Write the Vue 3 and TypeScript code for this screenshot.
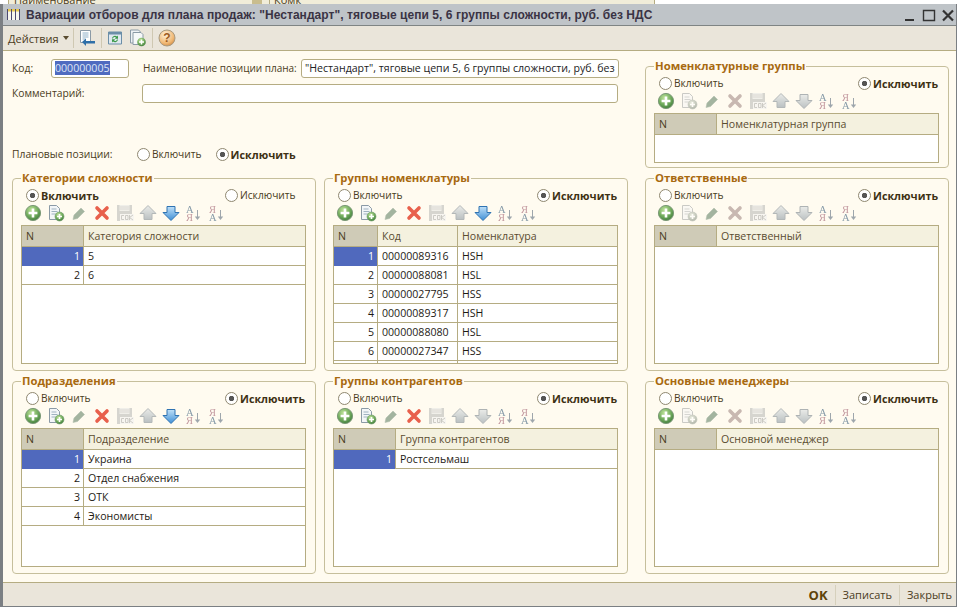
<script setup lang="ts">
type Col = { label: string; width?: number }
type Box = {
  title: string
  include: boolean
  cols: Col[]
  rows: string[][]
  enabled: string[]
  tail?: boolean
}
const tools = ['add', 'copy', 'edit', 'del', 'save', 'up', 'down', 'az', 'za']
const all = ['add', 'copy', 'del', 'down', 'az', 'za']
const topBox: Box = {
  title: 'Номенклатурные группы',
  include: false,
  cols: [{ label: 'N', width: 61 }, { label: 'Номенклатурная группа' }],
  rows: [],
  enabled: ['add', 'az', 'za'],
}
const orderedBoxes: Box[] = [
  topBox,
  {
    title: 'Категории сложности',
    include: true,
    cols: [{ label: 'N', width: 61 }, { label: 'Категория сложности' }],
    rows: [['1', '5'], ['2', '6']],
    enabled: all,
  },
  {
    title: 'Группы номенклатуры',
    include: false,
    cols: [{ label: 'N', width: 43 }, { label: 'Код', width: 80 }, { label: 'Номенклатура' }],
    rows: [
      ['1', '00000089316', 'HSH'],
      ['2', '00000088081', 'HSL'],
      ['3', '00000027795', 'HSS'],
      ['4', '00000089317', 'HSH'],
      ['5', '00000088080', 'HSL'],
      ['6', '00000027347', 'HSS'],
    ],
    enabled: all,
    tail: true,
  },
  {
    title: 'Ответственные',
    include: false,
    cols: [{ label: 'N', width: 61 }, { label: 'Ответственный' }],
    rows: [],
    enabled: ['add', 'az', 'za'],
  },
  {
    title: 'Подразделения',
    include: false,
    cols: [{ label: 'N', width: 61 }, { label: 'Подразделение' }],
    rows: [['1', 'Украина'], ['2', 'Отдел снабжения'], ['3', 'ОТК'], ['4', 'Экономисты']],
    enabled: all,
  },
  {
    title: 'Группы контрагентов',
    include: false,
    cols: [{ label: 'N', width: 61 }, { label: 'Группа контрагентов' }],
    rows: [['1', 'Ростсельмаш']],
    enabled: ['add', 'copy', 'del', 'az', 'za'],
  },
  {
    title: 'Основные менеджеры',
    include: false,
    cols: [{ label: 'N', width: 61 }, { label: 'Основной менеджер' }],
    rows: [],
    enabled: ['add', 'az', 'za'],
  },
]
function gridCols(box: Box): string {
  return box.cols.map((c) => (c.width ? c.width + 'px' : '1fr')).join(' ')
}
function isSort(t: string): boolean {
  return t === 'az' || t === 'za'
}
</script>

<template>
  <div class="screen">
    <svg class="sprite" width="0" height="0" aria-hidden="true">
      <defs>
        <radialGradient id="g-add" cx="40%" cy="30%" r="75%">
          <stop offset="0" stop-color="#bfe39a" />
          <stop offset="0.6" stop-color="#6da85a" />
          <stop offset="1" stop-color="#3f7a3c" />
        </radialGradient>
        <linearGradient id="g-blue" x1="0" y1="0" x2="0" y2="1">
          <stop offset="0" stop-color="#bfe0f8" />
          <stop offset="1" stop-color="#3f8fd6" />
        </linearGradient>
        <radialGradient id="g-help" cx="40%" cy="30%" r="75%">
          <stop offset="0" stop-color="#fdf0d8" />
          <stop offset="0.7" stop-color="#f0b874" />
          <stop offset="1" stop-color="#d08a44" />
        </radialGradient>
      </defs>
      <symbol id="i-add" viewBox="0 0 18 18">
        <circle cx="9" cy="9" r="7.6" fill="url(#g-add)" stroke="#7d9a78" />
        <path d="M9 4.600v8.800M4.600 9h8.800" stroke="#fff" stroke-width="2.600" />
      </symbol>
      <symbol id="i-copy" viewBox="0 0 18 18">
        <path d="M2.500 1.500h7l3 3v11h-10z" fill="#f3f6f8" stroke="#8b9aa6" />
        <path d="M4.500 5h5M4.500 7.500h6M4.500 10h4" stroke="#9fb2c0" />
        <circle cx="12.500" cy="12.500" r="4.500" fill="url(#g-add)" stroke="#6f9a6c" stroke-width=".6" />
        <path d="M12.500 10v5M10 12.500h5" stroke="#fff" stroke-width="1.600" />
      </symbol>
      <symbol id="i-edit" viewBox="0 0 18 18">
        <path d="M4 11l7-7 3.500 3.500-7 7L3 15.500z" fill="#a3b49f" stroke="#b4c0ae" stroke-width=".6" />
      </symbol>
      <symbol id="i-del" viewBox="0 0 18 18">
        <path d="M4 4l10 10M14 4L4 14" stroke="#e8604c" stroke-width="3.600" stroke-linecap="round" />
      </symbol>
      <symbol id="i-save" viewBox="0 0 18 18">
        <path d="M1 1h15v16H1z" fill="#a9b0ae" />
        <path d="M3.500 1h10v6h-10z" fill="#dfe3e1" />
        <path d="M3.500 3h10M3.500 5h10" stroke="#b5bab7" />
        <path d="M4 10h14v7H4z" fill="#eef0ee" />
        <path d="M5.500 11.500h2.500M5.500 15.500h2.500M5.500 11.500v4M9.500 11.500v4h2.500v-4zM13.500 11v5M17 11l-3.500 2.500 3.500 2.500" fill="none" stroke="#8b938f" stroke-width=".9" />
      </symbol>
      <symbol id="i-up" viewBox="0 0 18 18">
        <path d="M9 1.500L17 9.500h-4v6H5v-6H1z" fill="url(#g-blue)" stroke="#3c7cb8" />
      </symbol>
      <symbol id="i-down" viewBox="0 0 18 18">
        <path d="M5 2.500h8v6h4L9 16.500 1 8.500h4z" fill="url(#g-blue)" stroke="#2f73b2" />
      </symbol>
    </svg>

    <div class="behind">
      <div class="behind-a">Наименование<i class="behind-mark"></i></div>
      <div class="behind-b">Комк</div>
    </div>

    <div class="window">
      <header class="titlebar">
        <svg class="title-icon" width="15" height="13" viewBox="0 0 15 13">
          <path d="M1 1h13v11H1z" fill="#f7f6ee" />
          <path d="M1 1h13v2.500H1z" fill="#e8c94f" />
          <path d="M1.500 1v11M5.500 1v11M9.500 1v11M13.500 1v11" stroke="#4d4a70" />
        </svg>
        <span class="title-text">Вариации отборов для плана продаж: "Нестандарт", тяговые цепи 5, 6 группы сложности, руб. без НДС</span>
        <div class="win-buttons">
          <svg width="14" height="14" viewBox="0 0 14 14"><path d="M2 12h9" stroke="#333" stroke-width="2" /></svg>
          <svg width="14" height="14" viewBox="0 0 14 14"><path d="M1.500 2.500h11v10h-11z" fill="none" stroke="#333" stroke-width="1.400" /></svg>
          <svg width="14" height="14" viewBox="0 0 14 14"><path d="M2 2.500l10 10M12 2.500l-10 10" stroke="#333" stroke-width="2.200" /></svg>
        </div>
      </header>

      <nav class="toolbar">
        <span class="menu">Действия<i class="caret"></i></span>
        <span class="sep first"></span>
        <svg class="tb-icon" width="18" height="18" viewBox="0 0 18 18">
          <path d="M2.500 1.500h10v12h-10z" fill="#fff" stroke="#8b9aa6" />
          <path d="M4.500 4h6M4.500 6h6M4.500 8h6M4.500 10h3" stroke="#8fb0c8" />
          <path d="M4 13l4-3.500V12h9v2.500H8V17z" fill="#2f6fa8" />
        </svg>
        <span class="sep"></span>
        <svg class="tb-icon" width="18" height="18" viewBox="0 0 18 18">
          <path d="M2.500 3h13v12h-13z" fill="#dfe8ef" stroke="#6b8ea8" />
          <path d="M2.500 3h13v2.500h-13z" fill="#6b8ea8" />
          <path d="M6 9.500a3 3 0 0 1 5-2l1-1v3.200H8.800l1.200-1.200a1.800 1.800 0 0 0-3 1zM12 10.500a3 3 0 0 1-5 2l-1 1v-3.200h3.200L8 11.500a1.800 1.800 0 0 0 3-1z" fill="#3c9a4a" />
        </svg>
        <svg class="tb-icon second" width="18" height="18" viewBox="0 0 18 18">
          <path d="M1.500 1h8l2 2v11h-10z" fill="#eef1f4" stroke="#8b9aa6" />
          <path d="M4 3.500h8l2 2v10H4z" fill="#f6f8f9" stroke="#8b9aa6" />
          <circle cx="12.500" cy="13" r="4.300" fill="url(#g-add)" />
          <path d="M12.500 10.500v5M10 13h5" stroke="#fff" stroke-width="1.500" />
        </svg>
        <span class="sep"></span>
        <svg class="tb-icon help" width="18" height="18" viewBox="0 0 18 18">
          <circle cx="9" cy="9" r="8" fill="url(#g-help)" stroke="#a89a80" />
          <text x="9" y="13" class="help-mark">?</text>
        </svg>
      </nav>

      <main class="body">
        <section class="form">
          <div class="form-row">
            <label class="lbl code-lbl">Код:</label>
            <span class="field code"><span class="selected">000000005</span></span>
            <label class="lbl name-lbl">Наименование позиции плана:</label>
            <span class="field name">"Нестандарт", тяговые цепи 5, 6 группы сложности, руб. без</span>
          </div>
          <div class="form-row comment-row">
            <label class="lbl comment-lbl">Комментарий:</label>
            <span class="field comment"></span>
          </div>
          <div class="plan-row">
            <label class="lbl plan-lbl">Плановые позиции:</label>
            <span class="radio"><i class="dot"></i>Включить</span>
            <span class="radio on"><i class="dot"></i>Исключить</span>
          </div>
        </section>

        <section
          v-for="(box, bi) in orderedBoxes"
          :key="box.title"
          class="box"
          :class="{ compact: box === topBox, right: bi % 3 === 0 }"
        >
          <h3 class="box-title">{{ box.title }}</h3>
          <div class="radios">
            <span class="radio first" :class="{ on: box.include }"><i class="dot"></i>Включить</span>
            <span class="radio" :class="{ on: !box.include }"><i class="dot"></i>Исключить</span>
          </div>
          <div class="box-tools">
            <svg
              v-for="t in tools"
              :key="t"
              class="tool"
              :class="{ dis: !box.enabled.includes(t) && t !== 'edit', sorter: isSort(t) }"
              width="18"
              height="18"
              viewBox="0 0 18 18"
            >
              <template v-if="isSort(t)">
                <text x="1" y="8.500" :class="t === 'az' ? 'sort-a' : 'sort-b'">{{ t === 'az' ? 'А' : 'Я' }}</text>
                <text x="1" y="16.500" :class="t === 'az' ? 'sort-b' : 'sort-a'">{{ t === 'az' ? 'Я' : 'А' }}</text>
                <path d="M12.500 6v9" stroke="#7d8a95" />
                <path d="M9.800 12.500h5.400L12.500 16z" fill="#7d8a95" />
              </template>
              <use v-else :href="'#i-' + t" />
            </svg>
          </div>
          <div class="table">
            <div class="tr head" :style="{ gridTemplateColumns: gridCols(box) }">
              <div v-for="(c, i) in box.cols" :key="c.label" class="th" :class="{ n: i === 0 }">{{ c.label }}</div>
            </div>
            <div v-for="(r, ri) in box.rows" :key="ri" class="tr" :style="{ gridTemplateColumns: gridCols(box) }">
              <div v-for="(v, i) in r" :key="i" class="td" :class="{ num: i === 0, cur: i === 0 && ri === 0 }">{{ v }}</div>
            </div>
            <div v-if="box.tail" class="tail" :style="{ gridTemplateColumns: gridCols(box) }"><i></i><i></i><i></i></div>
          </div>
        </section>
      </main>

      <footer class="footer">
        <span class="btn ok">OK</span>
        <span class="btn">Записать</span>
        <span class="btn last">Закрыть</span>
      </footer>
    </div>
  </div>
</template>

<style scoped>
.screen {
  width: 959px;
  height: 610px;
  overflow: hidden;
  background: #fff;
  font-family: "Open Sans", "Noto Sans", sans-serif;
  font-size: 10.6px;
  color: #4a3c22;
}
.sprite {
  position: absolute;
}
.behind {
  height: 4px;
  display: flex;
  overflow: hidden;
  background: #fff;
  font-size: 11px;
  line-height: 0;
}
.behind-a {
  display: flex;
  width: 262px;
  margin-left: 8px;
  padding-left: 5px;
  padding-right: 7px;
  background: #f1edd9;
  border-left: 1px solid #b5ac82;
  border-right: 1px solid #b5ac82;
  box-sizing: border-box;
  overflow: hidden;
  white-space: nowrap;
}
.behind-mark {
  margin-left: auto;
  width: 10px;
  height: 4px;
  background: #c9bd8e;
}
.behind-b {
  width: 385px;
  padding-left: 4px;
  background: #f1edd9;
  border-right: 1px solid #b5ac82;
  box-sizing: border-box;
  overflow: hidden;
}
.window {
  width: 957px;
  height: 603px;
  box-sizing: border-box;
  border: solid #7b7f83;
  border-width: 0 1px 1px 3px;
  display: flex;
  flex-direction: column;
}
.titlebar {
  height: 22px;
  flex: none;
  display: flex;
  align-items: center;
  background: #bfc4c8;
  border-bottom: 1px solid #7f8484;
  padding-left: 3px;
  box-sizing: border-box;
}
.title-icon {
  margin-right: 5px;
}
.title-text {
  font-family: "Liberation Sans", sans-serif;
  font-weight: 700;
  font-size: 12px;
  letter-spacing: 0.05px;
  color: #3a3344;
  white-space: nowrap;
}
.win-buttons {
  margin-left: auto;
  display: flex;
  gap: 5px;
  padding-right: 1px;
}
.toolbar {
  height: 25px;
  flex: none;
  box-sizing: border-box;
  display: flex;
  align-items: center;
  background: #eae5da;
  border-bottom: 1px solid #b5ac82;
  padding-left: 5px;
}
.menu {
  width: 61px;
  display: flex;
  align-items: center;
  font-size: 11px;
}
.caret {
  border: 3px solid transparent;
  border-top: 4px solid #5a4c30;
  margin: 3px 0 0 4px;
}
.sep {
  width: 1px;
  height: 20px;
  background: #cfc8b2;
}
.sep.first {
  margin-left: 4px;
}
.tb-icon {
  margin-left: 4px;
  margin-right: 5px;
}
.tb-icon.second {
  margin-left: 0;
}
.tb-icon.help {
  margin-left: 5px;
}
.help-mark {
  font-family: "Liberation Sans", sans-serif;
  font-weight: 700;
  font-size: 12px;
  text-anchor: middle;
  fill: #9c5a1e;
}
.body {
  flex: 1;
  display: grid;
  grid-template-columns: 304px 304px 313px;
  grid-template-rows: 102px 193px 193px;
  column-gap: 8px;
  row-gap: 10px;
  padding: 15px 0 0 9px;
  background: #fffbf0;
  box-sizing: border-box;
}
.form {
  grid-column: 1 / span 2;
  grid-row: 1;
  margin-top: -8px;
  display: flex;
  flex-direction: column;
}
.form-row {
  display: flex;
  align-items: center;
  height: 20px;
}
.comment-row {
  margin-top: 5px;
}
.lbl {
  white-space: nowrap;
  font-size: 10.3px;
}
.code-lbl {
  width: 39px;
}
.code {
  width: 78px;
  margin-right: 14px;
}
.name-lbl {
  width: 158px;
  font-size: 10px;
}
.field {
  height: 19px;
  box-sizing: border-box;
  display: block;
  border: 1px solid #b5ac82;
  border-radius: 3px;
  background: #fff;
  padding: 0 3px;
  line-height: 17px;
  white-space: nowrap;
  overflow: hidden;
  color: #222;
}
.name {
  width: 318px;
}
.comment-lbl {
  width: 130px;
}
.comment {
  width: 476px;
}
.selected {
  background: #4f6bc0;
  color: #dfe6f5;
}
.plan-row {
  display: flex;
  align-items: center;
  margin-top: 44px;
  height: 14px;
}
.plan-lbl {
  width: 125px;
}
.plan-row .radio + .radio {
  margin-left: 14px;
}
.radio {
  display: inline-flex;
  align-items: center;
  white-space: nowrap;
  font-size: 10.2px;
}
.radio.first {
  width: 199px;
  flex: none;
}
.dot {
  width: 13px;
  height: 13px;
  box-sizing: border-box;
  border: 1px solid #8f8870;
  border-radius: 50%;
  background: #fff;
  margin-right: 2px;
  flex: none;
}
.radio.on {
  font-weight: 700;
  font-size: 10.8px;
  color: #3e3114;
}
.radio.on .dot {
  background: radial-gradient(circle at center, #555 0 2.400px, #fff 3px);
}
.box {
  box-sizing: border-box;
  border: 1px solid #c6bf9c;
  border-radius: 4px;
  padding: 0 9px 6px 8px;
  display: flex;
  flex-direction: column;
  min-height: 0;
}
.box.right {
  margin-left: 9px;
}
.box.compact {
  grid-column: 3;
  grid-row: 1;
  padding-bottom: 4px;
}
.box-title {
  margin: -9px 0 0 0;
  width: fit-content;
  padding: 0 1px;
  background: #fffbf0;
  font-size: 11.3px;
  font-weight: 700;
  line-height: 15px;
  color: #a86a10;
}
.radios {
  display: flex;
  align-items: center;
  height: 14px;
  margin-top: 3px;
  padding-left: 5px;
}
.box-tools {
  display: flex;
  height: 18px;
  margin-top: 2px;
  margin-left: 3px;
}
.tool {
  width: 18px;
  height: 18px;
  margin-right: 5px;
  flex: none;
}
.tool.dis {
  filter: grayscale(0.8) opacity(0.5);
}
.tool.sorter {
  filter: opacity(0.75);
}
.table {
  margin-top: 3px;
  flex: 1;
  min-height: 0;
  border: 1px solid #b5ac82;
  background: #fff;
  overflow: hidden;
  color: #1e1a14;
}
.tr {
  display: grid;
  height: 19px;
  box-sizing: border-box;
  border-bottom: 1px solid #b5ac82;
}
.tr.head {
  height: 21px;
  background: #f4f1df;
  color: #5a4c30;
}
.th {
  padding-left: 4px;
  line-height: 20px;
  border-left: 1px solid #b5ac82;
}
.th.n {
  border-left: 0;
  background: #cfcbb7;
  color: #4a3c22;
}
.td {
  padding-left: 4px;
  line-height: 19px;
  border-left: 1px solid #b5ac82;
  white-space: nowrap;
}
.td.num {
  border-left: 0;
  text-align: right;
  padding: 0 3px 0 0;
}
.td.cur {
  background: #5069bd;
  color: #fff;
}
.tail {
  display: grid;
  height: 4px;
}
.tail i {
  border-left: 1px solid #b5ac82;
}
.tail i:first-child {
  border-left: 0;
}
.footer {
  height: 24px;
  flex: none;
  box-sizing: border-box;
  border-top: 1px solid #b5ac82;
  background: #eae5da;
  display: flex;
  justify-content: flex-end;
  align-items: center;
}
.btn {
  padding: 0 7px;
  line-height: 20px;
  border-left: 1px solid #d6d0bc;
  font-size: 11px;
}
.btn.last {
  padding-right: 4px;
}
.btn.ok {
  border-left: 0;
  font-size: 13px;
  font-weight: 700;
  color: #5f4308;
}
.sort-a,
.sort-b {
  font-family: "Liberation Serif", serif;
  font-size: 10.5px;
}
.sort-a {
  fill: #5d7a90;
}
.sort-b {
  fill: #b07a86;
}
</style>

<style>
body {
  background: #fff;
}
</style>
